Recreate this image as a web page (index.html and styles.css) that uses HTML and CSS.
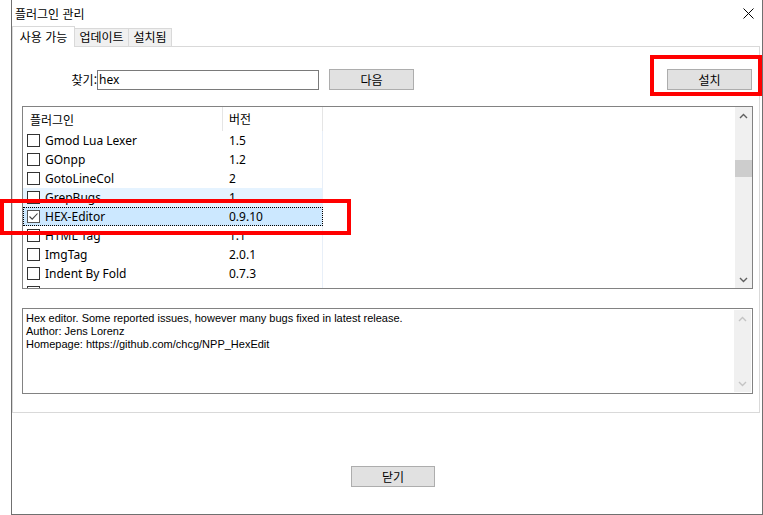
FILE: index.html
```html
<!DOCTYPE html>
<html lang="ko">
<head>
<meta charset="utf-8">
<title>플러그인 관리</title>
<link rel="stylesheet" href="styles.css">
</head>
<body>
<div class="window">
  <div class="titlebar">
    <span class="title">플러그인 관리</span>
    <svg class="close-x" width="11" height="11" viewBox="0 0 11 11"><path d="M0.5 0.5 L10.5 10.5 M10.5 0.5 L0.5 10.5" stroke="#000" stroke-width="1" fill="none"/></svg>
  </div>
  <div class="tabs">
    <div class="tab active">사용 가능</div>
    <div class="tab tab-upd">업데이트</div>
    <div class="tab tab-inst">설치됨</div>
  </div>
  <div class="panel">
    <div class="search-row">
      <span class="find-label">찾기:</span>
      <div class="input">hex</div>
      <div class="btn btn-next">다음</div>
      <div class="btn btn-install">설치</div>
    </div>
    <div class="list">
      <div class="list-main">
        <div class="list-header">
          <div class="cell-name">플러그인</div>
          <div class="cell-ver">버전</div>
        </div>
        <div class="row"><div class="cell-name"><span class="cb"></span>Gmod Lua Lexer</div><div class="cell-ver">1.5</div></div>
        <div class="row"><div class="cell-name"><span class="cb"></span>GOnpp</div><div class="cell-ver">1.2</div></div>
        <div class="row"><div class="cell-name"><span class="cb"></span>GotoLineCol</div><div class="cell-ver">2</div></div>
        <div class="row hover"><div class="cell-name"><span class="cb"></span>GrepBugs</div><div class="cell-ver">1</div></div>
        <div class="row selected"><div class="cell-name"><span class="cb checked"><svg width="11" height="11" viewBox="0 0 11 11"><path d="M1.5 5.5 L4.2 8.2 L9.5 2.5" stroke="#404040" stroke-width="1.1" fill="none"/></svg></span>HEX-Editor</div><div class="cell-ver">0.9.10</div></div>
        <div class="row"><div class="cell-name"><span class="cb"></span>HTML Tag</div><div class="cell-ver">1.1</div></div>
        <div class="row"><div class="cell-name"><span class="cb"></span>ImgTag</div><div class="cell-ver">2.0.1</div></div>
        <div class="row"><div class="cell-name"><span class="cb"></span>Indent By Fold</div><div class="cell-ver">0.7.3</div></div>
        <div class="row"><div class="cell-name"><span class="cb"></span></div><div class="cell-ver"></div></div>
      </div>
      <div class="vscroll">
        <div class="sb-btn"><svg width="9" height="6" viewBox="0 0 9 6"><path d="M1 5 L4.5 1.5 L8 5" stroke="#606060" stroke-width="1.4" fill="none"/></svg></div>
        <div class="sb-track"><div class="sb-thumb"></div></div>
        <div class="sb-btn"><svg width="9" height="6" viewBox="0 0 9 6"><path d="M1 1 L4.5 4.5 L8 1" stroke="#606060" stroke-width="1.4" fill="none"/></svg></div>
      </div>
    </div>
    <div class="desc">
      <div class="desc-text">Hex editor. Some reported issues, however many bugs fixed in latest release.<br>Author: Jens Lorenz<br>Homepage: https://github.com/chcg/NPP_HexEdit</div>
      <div class="vscroll disabled">
        <div class="sb-btn"><svg width="9" height="6" viewBox="0 0 9 6"><path d="M1 5 L4.5 1.5 L8 5" stroke="#c4c4c4" stroke-width="1.4" fill="none"/></svg></div>
        <div class="sb-track"></div>
        <div class="sb-btn"><svg width="9" height="6" viewBox="0 0 9 6"><path d="M1 1 L4.5 4.5 L8 1" stroke="#c4c4c4" stroke-width="1.4" fill="none"/></svg></div>
      </div>
    </div>
  </div>
  <div class="footer">
    <div class="btn btn-close">닫기</div>
  </div>
</div>
<div class="mark mark-install"></div>
<div class="mark mark-hex"></div>
</body>
</html>
```
FILE: styles.css
```css
* { box-sizing: border-box; }
html, body { margin: 0; padding: 0; background: #fff; }
body {
  width: 763px;
  height: 515px;
  overflow: hidden;
  position: relative;
  font-family: "Noto Sans", "Noto Sans CJK KR", sans-serif;
  font-size: 12px;
  color: #000;
}
.window {
  margin-left: 11px;
  width: 752px;
  height: 515px;
  border-left: 1px solid #707070;
  border-right: 1px solid #707070;
  border-bottom: 1px solid #707070;
  display: flex;
  flex-direction: column;
}
.titlebar {
  height: 26px;
  display: flex;
  align-items: center;
  padding-left: 3px;
  font-family: "Noto Sans CJK KR", sans-serif;
  font-size: 12px;
}
.close-x { margin-left: auto; margin-right: 8px; }
.tabs {
  height: 20px;
  display: flex;
  align-items: flex-end;
  font-family: "Noto Sans CJK KR", sans-serif;
  font-size: 12px;
  position: relative;
  z-index: 1;
}
.tab {
  height: 18px;
  line-height: 16px;
  border-top: 1px solid #d9d9d9;
  border-right: 1px solid #d9d9d9;
  background: #f0f0f0;
  text-align: center;
}
.tab.active {
  width: 63px;
  height: 21px;
  margin-bottom: -1px;
  line-height: 19px;
  border-left: 1px solid #d9d9d9;
  background: #fff;
}
.tab-upd { width: 54px; }
.tab-inst { width: 43px; }
.panel {
  width: 748px;
  border: 1px solid #d9d9d9;
  padding: 22px 0 18px 0;
  background: #fff;
}
.search-row {
  height: 21px;
  display: flex;
  align-items: center;
  font-family: "Noto Sans CJK KR", sans-serif;
}
.find-label {
  width: 84px;
  text-align: right;
}
.input {
  width: 222px;
  height: 20px;
  border: 1px solid #7a7a7a;
  padding-left: 1px;
  line-height: 18px;
  font-family: "Noto Sans", sans-serif;
}
.btn {
  height: 21px;
  width: 85px;
  background: #e1e1e1;
  border: 1px solid #adadad;
  text-align: center;
  line-height: 19px;
  font-family: "Noto Sans CJK KR", sans-serif;
  font-size: 12px;
}
.btn-next { margin-left: 10px; }
.btn-install { margin-left: auto; margin-right: 7px; }
.list {
  margin: 16px 6px 0 9px;
  height: 183px;
  border: 1px solid #828282;
  display: flex;
}
.list-main {
  flex: 1;
  overflow: hidden;
}
.list-header {
  height: 24px;
  display: flex;
  font-family: "Noto Sans CJK KR", sans-serif;
}
.list-header .cell-name,
.list-header .cell-ver {
  line-height: 23px;
  border-right: 1px solid #e5e5e5;
}
.list-header .cell-name { padding-left: 7px; }
.cell-name { width: 200px; display: flex; align-items: center; }
.cell-ver { width: 100px; padding-left: 6px; }
.row {
  height: 19px;
  display: flex;
  width: 300px;
  line-height: 19px;
}
.row .cell-name { border-right: 1px solid transparent; }
.row .cell-ver { border-right: 1px solid #e8eff8; }
.row.hover { background: #e5f3ff; }
.row.selected {
  background: #cce8ff;
  outline: 1px dotted #000;
  outline-offset: -1px;
}
.cb {
  width: 13px;
  height: 13px;
  border: 1px solid #333;
  background: #fff;
  margin-left: 4px;
  margin-right: 5px;
  display: flex;
  align-items: center;
  justify-content: center;
  flex: none;
}
.cb.checked { border-color: #555; }
.vscroll {
  width: 17px;
  background: #f0f0f0;
  display: flex;
  flex-direction: column;
}
.sb-btn {
  height: 17px;
  display: flex;
  align-items: center;
  justify-content: center;
}
.sb-track {
  flex: 1;
  padding-top: 36px;
}
.sb-thumb {
  height: 17px;
  background: #cdcdcd;
}
.desc {
  margin: 19px 6px 0 9px;
  height: 86px;
  border: 1px solid #828282;
  padding: 1px;
  display: flex;
}
.desc-text {
  flex: 1;
  padding: 2px 0 0 2px;
  font-family: "Liberation Sans", sans-serif;
  font-size: 11px;
  line-height: 13px;
}
.footer {
  margin-top: 53px;
  padding-left: 339px;
}
.btn-close { width: 84px; }
.mark {
  position: absolute;
  border: 4px solid #ff0000;
}
.mark-install { left: 650px; top: 55px; width: 112px; height: 41px; }
.mark-hex { left: 0; top: 199px; width: 351px; height: 36px; }
```
